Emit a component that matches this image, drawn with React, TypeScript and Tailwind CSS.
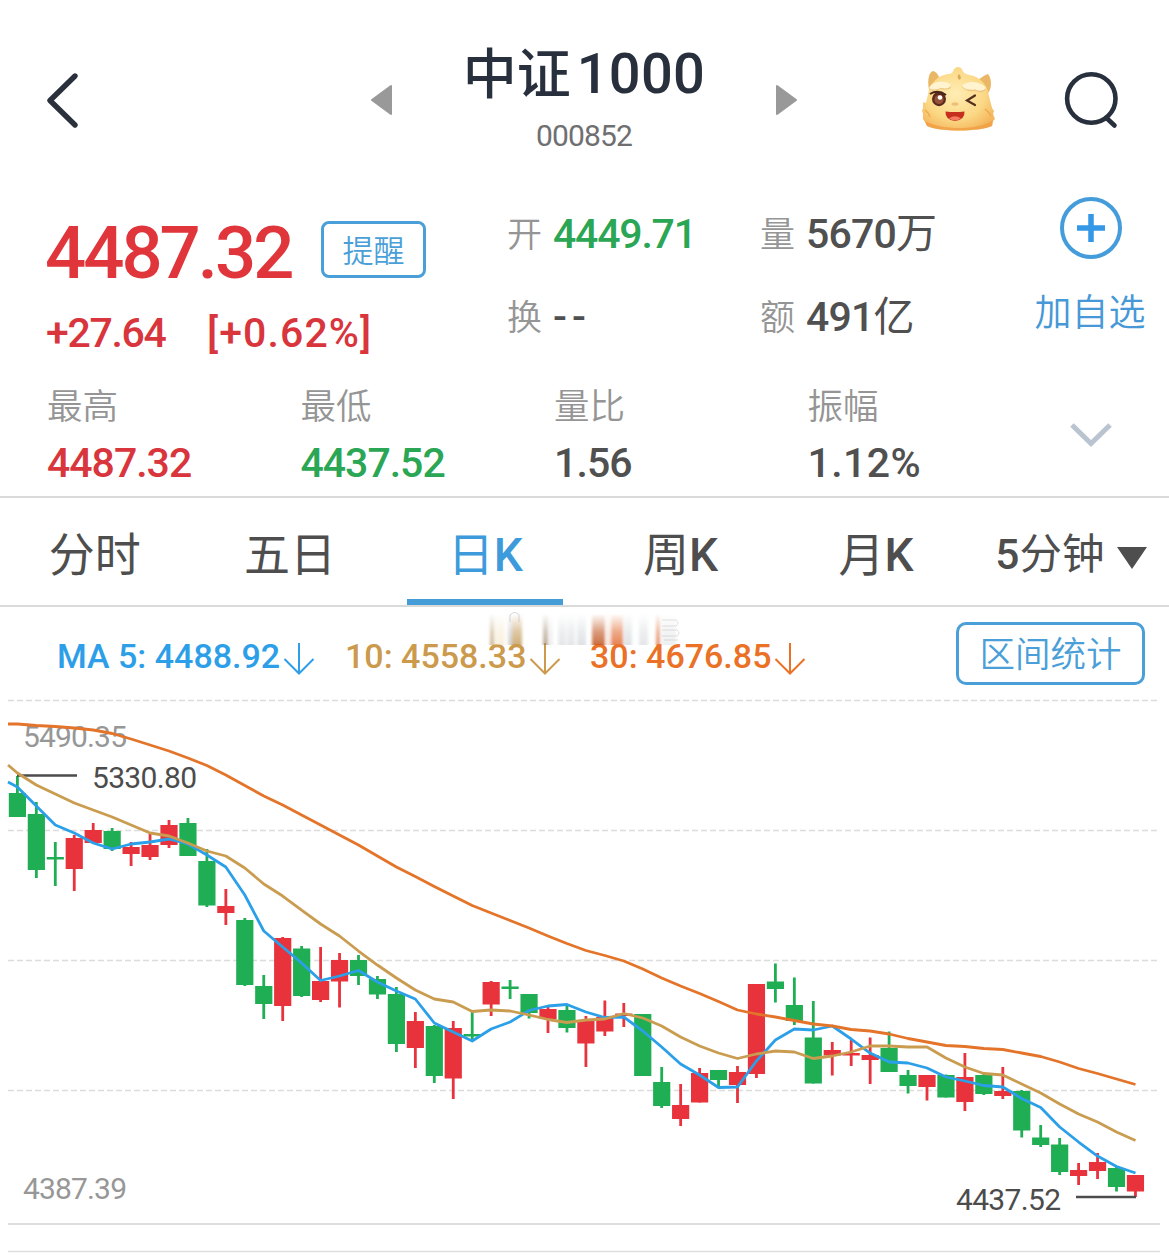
import React, { useState } from 'react';

type Candle = {
  up: boolean;
  high: number;
  top: number;
  bottom: number;
  low: number;
};

const RED = '#e8323c';
const GREEN = '#1fae54';

// [direction, high, body top, body bottom, low] in chart units
const rows: [string, number, number, number, number][] = [
  ['d', 776, 793, 817, 817],
  ['d', 802, 814, 870, 878],
  ['d', 842, 857, 859.5, 886],
  ['u', 835, 838, 869, 891],
  ['u', 823, 830, 843, 843],
  ['d', 828, 831, 849, 851],
  ['u', 842, 847, 854, 866],
  ['u', 834, 845, 857, 860],
  ['u', 820, 825, 845, 848],
  ['d', 818, 823, 856, 856],
  ['d', 849, 861, 905.5, 907],
  ['u', 889, 906, 913, 925],
  ['d', 918, 920, 985, 986],
  ['d', 975, 986, 1004, 1019],
  ['u', 937, 938, 1006, 1021],
  ['d', 946, 948.5, 996, 997],
  ['u', 947, 981, 1000, 1002],
  ['u', 953, 960, 981.5, 1007.5],
  ['d', 955, 960, 976, 985],
  ['d', 976, 979, 994.5, 999],
  ['d', 987, 994, 1044, 1052],
  ['u', 1012, 1021, 1048, 1068],
  ['d', 1025, 1026, 1076, 1083],
  ['u', 1021, 1028, 1078.5, 1099],
  ['d', 1012, 1034, 1036.5, 1040],
  ['u', 981, 982, 1004.5, 1016],
  ['d', 980, 986.5, 989, 999],
  ['d', 994, 994, 1013, 1018.5],
  ['u', 1007, 1009, 1019, 1033],
  ['d', 1006, 1010, 1028, 1032.5],
  ['u', 1016, 1021, 1043.5, 1067],
  ['u', 1000.5, 1017, 1031.5, 1036],
  ['u', 1003, 1013.5, 1016, 1027],
  ['d', 1014, 1014, 1076, 1076],
  ['d', 1067, 1082, 1106, 1108],
  ['u', 1084, 1105, 1119, 1126],
  ['u', 1068, 1073, 1102.5, 1102.5],
  ['d', 1070, 1070, 1080, 1087],
  ['u', 1066, 1072, 1085, 1103],
  ['u', 984, 984, 1074, 1078],
  ['d', 963.5, 981.5, 989, 1002.5],
  ['d', 977.5, 1005, 1021, 1025],
  ['d', 1001, 1037.5, 1083.5, 1083.5],
  ['u', 1042, 1050, 1055.5, 1075.5],
  ['u', 1040, 1053, 1055.5, 1066],
  ['u', 1037.5, 1055, 1060, 1084],
  ['d', 1031.5, 1048, 1072, 1072],
  ['d', 1070, 1075, 1086, 1093.5],
  ['u', 1075, 1075, 1087, 1100.5],
  ['d', 1074.5, 1075, 1097.5, 1097.5],
  ['u', 1053, 1077, 1102, 1111],
  ['d', 1072.5, 1075, 1094, 1095],
  ['u', 1067, 1091, 1096, 1099],
  ['d', 1090, 1091, 1130.5, 1137.5],
  ['d', 1125, 1137.5, 1145, 1147],
  ['d', 1138, 1144.5, 1172, 1175],
  ['u', 1163, 1170, 1176, 1185],
  ['u', 1153, 1162, 1171, 1179],
  ['d', 1167, 1168, 1187, 1191.5],
  ['u', 1175, 1175, 1191.5, 1197],
];

const candles: Candle[] = rows.map(([dir, high, top, bottom, low]) => ({
  up: dir === 'u',
  high,
  top,
  bottom,
  low,
}));

const ma5 = [
  787, 806, 825, 833, 843, 849, 844, 842, 839, 844, 855, 867, 895, 931, 947, 963, 980.5, 976, 970.5, 982, 991, 999,
  1023, 1032, 1041, 1029, 1022, 1010.5, 1006, 1004.5, 1012, 1017.5, 1017, 1031, 1047, 1064, 1075, 1087.5, 1087, 1061,
  1040, 1029, 1030, 1026, 1039, 1053, 1062, 1063, 1068, 1077, 1081, 1085.5, 1087, 1098.5, 1107.5, 1127, 1142, 1156,
  1166.5, 1173,
];

const ma10 = [
  773, 785, 794, 803, 810, 817, 825, 833, 836, 843, 851, 856, 868, 884, 896, 910, 924, 936, 951, 965, 978, 990, 999,
  1002, 1011.5, 1010, 1011, 1015, 1019.5, 1022.5, 1020, 1019, 1013.5, 1018, 1026, 1037, 1046, 1053, 1058.5, 1054,
  1051, 1052, 1058.5, 1056, 1052, 1046, 1046, 1047, 1047, 1058, 1067, 1073.5, 1075, 1084, 1093, 1104, 1114, 1122,
  1132, 1140.5,
];

const ma30 = [
  724, 725.5, 726.5, 728, 730, 733.5, 739, 745, 751, 758, 765.5, 775, 785.5, 796, 805, 815, 825, 835, 845, 856, 867,
  876.5, 886.5, 896, 905.5, 913, 920.5, 928, 936, 943.5, 950.5, 955.5, 961, 969, 978, 986, 993.5, 1001.5, 1010, 1014,
  1017, 1020.5, 1024, 1026, 1029.5, 1031, 1034, 1038.5, 1042, 1045.5, 1046.5, 1048.5, 1049.5, 1053, 1056.5, 1062,
  1068.5, 1073.5, 1079, 1084.5,
];

const xAt = (i: number) => 17.4 + i * 18.95;

const toLine = (startY: number, values: number[]) =>
  [`8,${startY}`, ...values.map((y, i) => `${xAt(i).toFixed(1)},${y}`)].join(' ');

const Mascot = () => (
  <svg width="76" height="68" viewBox="0 0 76 68">
    <defs>
      <radialGradient id="face" cx="46%" cy="42%" r="62%">
        <stop offset="0" stopColor="#ffedb4" />
        <stop offset="0.65" stopColor="#fbd885" />
        <stop offset="1" stopColor="#f5b75e" />
      </radialGradient>
    </defs>
    <path d="M8 24 C6 14 8 6 12 5 C16 6 18 10 19 14Z" fill="#e9b765" />
    <path d="M55 14 C60 13 63 9 67 8 C71 13 71 22 67 27Z" fill="#e9b765" />
    <path
      d="M8 24 C10 17 16 10 27 8 C31 8 32 6 33 3 Q37 -1 41 3 Q42 7 45 8 C56 10 64 15 67 25 C68 32 70 37 71 42 L73 45 L72 48 L74 53 L72 55 L71 60 C58 66 18 66 6 60 L4 56 L2 53 L2 48 L1 45 L2 42 L2 36 L5 37Z"
      fill="url(#face)"
      strokeLinejoin="round"
    />
    <path d="M4 55 C20 64 56 65 72 54 L71 60 C58 66 18 66 6 60Z" fill="#f09a3e" opacity=".7" />
    <path d="M64 43 Q68 46 70 50 M4 44 Q8 47 9 51" fill="none" stroke="#eda951" strokeWidth="1.500" />
    <path d="M36.500 11 Q38 5 40 12 Q38 16 36.500 11Z" fill="#dba95e" />
    <path d="M8 23 C12 15 26 15 30 20 Q30 25 20 23 Q12 26 8 23Z" fill="#ecc47f" />
    <path d="M8 22 C12 14 26 14 30 19 Q29 23.500 20 22 Q12 25 8 22Z" fill="#fff3d0" />
    <path d="M41 21 C45 15 60 16 65 23 Q62 28 54 25 Q45 26 41 21Z" fill="#ecc47f" />
    <path d="M41 20 C45 14 60 15 65 22 Q62 26.500 54 23.500 Q45 25 41 20Z" fill="#fff3d0" />
    <ellipse cx="18" cy="33" rx="7" ry="7.200" fill="#5a2b1c" />
    <path d="M9 28 Q17 23 25 29" fill="none" stroke="#4a2419" strokeWidth="2" />
    <circle cx="18" cy="33.500" r="4.600" fill="#965238" />
    <circle cx="19" cy="31.500" r="2.300" fill="#fff" />
    <path d="M54 29.500 L46 34.500 L54 39" fill="none" stroke="#54301d" strokeWidth="2.200" strokeLinecap="round" />
    <ellipse cx="34" cy="38" rx="3.500" ry="1.800" fill="#f0c078" />
    <path d="M24.500 45.500 Q34 46.500 43.500 45.500 Q44 54 34 55 Q24 54 24.500 45.500Z" fill="#c62e1e" />
    <path d="M28 52.500 Q34 48 40 52.500 Q34 56.500 28 52.500Z" fill="#f47a62" />
  </svg>
);

const Header = () => (
  <header className="flex h-[190px] items-start">
    <button className="ml-[46px] mt-[72px]">
      <svg width="34" height="58" viewBox="0 0 34 58" fill="none" stroke="#2a303c" strokeWidth="5.400">
        <path d="M29 4 L4 28.500 L29 53" strokeLinecap="round" strokeLinejoin="round" />
      </svg>
    </button>
    <button className="ml-[291px] mt-[85px]">
      <svg width="21" height="30" viewBox="0 0 21 30">
        <path d="M20 1 V29 L1 15Z" fill="#999" stroke="#999" strokeWidth="2" strokeLinejoin="round" />
      </svg>
    </button>
    <div className="flex w-[384px] flex-col items-center pt-[44px]">
      <h1 className="flex text-[56px] leading-[60px] font-medium text-[#27303c]">
        <span className="pt-[2px] text-[54px]">中证</span>
        <span className="ml-[6px] tracking-[0.3px]">1000</span>
      </h1>
      <p className="mt-[15px] text-[30px] leading-[30px] tracking-[-0.9px] text-[#6f6f72]">000852</p>
    </div>
    <button className="mt-[85px]">
      <svg width="21" height="30" viewBox="0 0 21 30">
        <path d="M1 1 V29 L20 15Z" fill="#999" stroke="#999" strokeWidth="2" strokeLinejoin="round" />
      </svg>
    </button>
    <button className="ml-[124px] mt-[66px]">
      <Mascot />
    </button>
    <button className="ml-[66px] mt-[71px]">
      <svg width="58" height="60" viewBox="0 0 58 60" fill="none" stroke="#27303c" strokeWidth="4.600">
        <circle cx="28.300" cy="27.500" r="24.200" />
        <path d="M43.500 47 L51.500 54.500" strokeLinecap="round" />
      </svg>
    </button>
  </header>
);

type QuoteItemProps = { label: string; value: string; unit?: string; className: string };

const QuoteItem = ({ label, value, unit, className }: QuoteItemProps) => (
  <div className="flex h-[44px] items-center">
    <span className="w-[46px] pt-[4px] text-[35px] leading-[44px] font-[350] text-[#959595]">{label}</span>
    <span className={`text-[41px] leading-[44px] font-medium ${className}`}>
      {value}
      {unit && <span className="font-normal">{unit}</span>}
    </span>
  </div>
);

const stats = [
  { label: '最高', value: '4487.32', color: 'tracking-[-1px] text-[#d8353d]' },
  { label: '最低', value: '4437.52', color: 'tracking-[-1px] text-[#2aa655]' },
  { label: '量比', value: '1.56', color: 'tracking-[-0.9px] text-[#505050]' },
  { label: '振幅', value: '1.12%', color: 'tracking-[0.4px] text-[#505050]' },
];

const Quote = () => (
  <section className="flex h-[308px] border-b-2 border-[#dadada]">
    <div className="flex w-[1011px] flex-col pl-[47px]">
      <div className="flex">
        <div className="w-[460px] pt-[31px]">
          <div className="flex h-[57px] items-center justify-between pr-[81px]">
            <span className="-ml-[2px] pt-[7px] text-[72.500px] leading-[57px] font-medium tracking-[-3px] text-[#e0353b]">
              4487.32
            </span>
            <button className="h-[57px] w-[105px] rounded-lg border-3 border-[#4b9fd8] pt-[3px] text-[31px] leading-[50px] font-[350] text-[#4b9fd8]">
              提醒
            </button>
          </div>
          <div className="mt-[33px] -ml-px flex h-[44px] text-[41px] leading-[44px] font-medium text-[#d8353d]">
            <span className="w-[161px] tracking-[-1.3px]">+27.64</span>
            <span className="tracking-[1.1px]">[+0.62%]</span>
          </div>
        </div>
        <div className="flex w-[253px] flex-col gap-[39px] pt-[22px]">
          <QuoteItem label="开" value="4449.71" className="tracking-[-1.2px] text-[#2aa655]" />
          <QuoteItem label="换" value="--" className="tracking-[5px] text-[#505050]" />
        </div>
        <div className="flex flex-col gap-[39px] pt-[22px]">
          <QuoteItem label="量" value="5670" unit="万" className="tracking-[-0.8px] text-[#505050]" />
          <QuoteItem label="额" value="491" unit="亿" className="tracking-[-0.8px] text-[#505050]" />
        </div>
      </div>
      <div className="mt-[31px] flex">
        {stats.map((s) => (
          <div key={s.label} className="w-[253.500px] shrink-0">
            <p className="h-[38px] pt-[2px] text-[35.500px] leading-[38px] font-[350] text-[#959595]">{s.label}</p>
            <p className={`mt-[17px] text-[41px] leading-[44px] font-medium ${s.color}`}>{s.value}</p>
          </div>
        ))}
      </div>
    </div>
    <div className="flex w-[158px] flex-col items-center pt-[7px] pl-[2px]">
      <button className="flex flex-col items-center">
        <svg width="62" height="62" viewBox="0 0 62 62" fill="none" stroke="#459cdb">
          <circle cx="31" cy="31" r="29" strokeWidth="4" />
          <path d="M31 17 V45 M17 31 H45" stroke="#3598e6" strokeWidth="5.500" />
        </svg>
        <span className="mt-[31px] mr-[2px] text-[37px] leading-[48px] font-[350] text-[#4699d6]">加自选</span>
      </button>
      <svg className="mt-[83px]" width="44" height="28" viewBox="0 0 44 28" fill="none">
        <path d="M3 4 L22 22.500 L41 4" stroke="#b9c4d0" strokeWidth="5" />
      </svg>
    </div>
  </section>
);

const tabs = ['分时', '五日', '日K', '周K', '月K', '5分钟'];

const Tabs = () => {
  const [active, setActive] = useState('日K');

  return (
    <nav className="-ml-[3px] grid h-[109px] grid-cols-6 border-b-2 border-[#dadada]">
      {tabs.map((tab) => (
        <button
          key={tab}
          onClick={() => setActive(tab)}
          className={`flex flex-col items-center text-[46px] ${active === tab ? 'text-[#3d9bdc]' : 'text-[#4e4e4e]'}`}
        >
          <span className="flex grow items-center pt-[12px] leading-[60px] whitespace-nowrap">
            {tab === '5分钟' ? (
              <span className="flex items-center gap-[13px] text-[42.500px]">
                <span>
                  <span className="font-medium">5</span>分钟
                </span>
                <svg width="30" height="22" viewBox="0 0 30 22" className="mt-[7px]">
                  <path d="M0 0 H30 L15 22Z" fill="#4e4e4e" />
                </svg>
              </span>
            ) : (
              <span>
                {tab.replace('K', '')}
                {tab.endsWith('K') && <span className="font-medium">K</span>}
              </span>
            )}
          </span>
          <span className={`h-[6px] w-[156px] ${active === tab ? 'bg-[#449dd7]' : ''}`} />
        </button>
      ))}
    </nav>
  );
};

const MaItem = ({ label, className }: { label: string; className: string }) => (
  <span className={`flex items-center ${className}`}>
    {label}
    <svg width="32" height="34" viewBox="0 0 32 34" className="ml-[3px] mt-[6px]" fill="none" stroke="currentColor" strokeWidth="2">
      <path d="M16 1 V31 M1.500 17 L16 31.500 L30.500 17" />
    </svg>
  </span>
);

// Smeared strips above the MA10 and MA30 values
const smears = [
  { x: 20, w: 4, color: '#b08a58', o: 0.7 },
  { x: 24, w: 11, color: '#f3e3c2', o: 0.6 },
  { x: 38, w: 4, color: '#999', o: 0.5 },
  { x: 42, w: 10, color: '#c39a58', o: 0.9 },
  { x: 73, w: 5, color: '#a08a6a', o: 0.8 },
  { x: 79, w: 4, color: '#ccd0d4', o: 0.4 },
  { x: 88, w: 8, color: '#ccd0d4', o: 0.6 },
  { x: 97, w: 8, color: '#ccd0d4', o: 0.6 },
  { x: 107, w: 9, color: '#ccd0d4', o: 0.7 },
  { x: 122, w: 13, color: '#c25a28', o: 1 },
  { x: 136, w: 5, color: '#f3d3c2', o: 0.7 },
  { x: 141, w: 12, color: '#e2733a', o: 1 },
  { x: 154, w: 8, color: '#ccd0d4', o: 0.7 },
  { x: 169, w: 9, color: '#ccd0d4', o: 0.6 },
  { x: 186, w: 4, color: '#df7844', o: 0.9 },
  { x: 192, w: 14, color: '#d8dadd', o: 0.5 },
];

const Smudge = () => (
  <svg className="absolute left-[470px] top-[3px]" width="230" height="40" viewBox="0 0 230 40">
    <defs>
      <linearGradient id="fade" x1="0" y1="0" x2="0" y2="1">
        <stop offset="0.1" stopColor="#fff" stopOpacity="0" />
        <stop offset="0.6" stopColor="#fff" stopOpacity=".6" />
        <stop offset="1" stopColor="#fff" stopOpacity=".9" />
      </linearGradient>
      <mask id="fadeMask">
        <rect width="230" height="36" fill="url(#fade)" />
      </mask>
      <filter id="soft">
        <feGaussianBlur stdDeviation="1.4 0.3" />
      </filter>
    </defs>
    <g mask="url(#fadeMask)">
      <g filter="url(#soft)">
        {smears.map((s) => (
          <rect key={s.x} x={s.x} y="2" width={s.w} height="33" fill={s.color} opacity={s.o} />
        ))}
      </g>
    </g>
    <path d="M40 12 V5 Q45 0 49 5 V12" fill="none" stroke="#bbb" strokeWidth="1" opacity=".6" />
    <g fill="none" stroke="#bbb" strokeWidth="1" opacity=".45">
      <path d="M192 10 H206 Q210 13 206 16 H192" />
      <path d="M192 20 H207 Q211 23 207 26 H192" />
      <path d="M194 30 H208" />
    </g>
  </svg>
);

const MaBar = () => (
  <div className="relative flex h-[88px] items-start">
    <div className="flex pt-[28px] pl-[57px] text-[34px] leading-[42px] font-medium whitespace-nowrap">
      <MaItem label="MA 5: 4488.92" className="w-[288px] text-[#2d9ee8]" />
      <MaItem label="10: 4558.33" className="w-[245px] text-[#cb9a4c]" />
      <MaItem label="30: 4676.85" className="text-[#ea7125]" />
    </div>
    <button className="mr-[24px] ml-auto mt-[15px] h-[63px] w-[189px] rounded-[10px] border-3 border-[#4b9fd8] pt-[3px] text-[35.500px] leading-[54px] font-[350] text-[#4b9fd8]">
      区间统计
    </button>
    <Smudge />
  </div>
);

const Chart = () => (
  <svg width="1169" height="563" viewBox="0 695 1169 563" className="block">
    {[700.5, 830.5, 960.5, 1090.5].map((y) => (
      <line key={y} x1="8" x2="1158" y1={y} y2={y} stroke="#dcdcdc" strokeWidth="1.500" strokeDasharray="6 3" />
    ))}
    <line x1="8" x2="1160" y1="1224" y2="1224" stroke="#dedede" strokeWidth="2" />
    <line x1="8" x2="1160" y1="1251.500" y2="1251.500" stroke="#dedede" strokeWidth="1.500" />

    <g fontSize="30">
      <text x="23" y="747" fill="#979797" textLength="104">5490.35</text>
      <text x="23" y="1199" fill="#979797" textLength="104">4387.39</text>
      <text x="92" y="788" fill="#4c4c4c" textLength="105">5330.80</text>
      <text x="956" y="1210" fill="#4c4c4c" textLength="105">4437.52</text>
    </g>

    {candles.map((c, i) => {
      const x = xAt(i);
      const color = c.up ? RED : GREEN;
      return (
        <g key={i} fill={color}>
          <rect x={x - 1.4} y={c.high} width="2.8" height={c.low - c.high} />
          <rect x={x - 8.6} y={c.top} width="17.2" height={c.bottom - c.top} />
        </g>
      );
    })}

    <path d="M17 775.500 H77 M1076 1197 H1136" stroke="#4c4c4c" strokeWidth="2.600" />

    <g fill="none" strokeWidth="2.800" strokeLinejoin="round">
      <polyline points={toLine(782, ma5)} stroke="#2ba0e8" />
      <polyline points={toLine(765, ma10)} stroke="#c99c50" />
      <polyline points={toLine(724, ma30)} stroke="#e37429" />
    </g>
  </svg>
);

const App: React.FC = () => {
  return (
    <div className="h-[1258px] w-[1169px] overflow-hidden bg-white font-[Roboto,'Noto_Sans_CJK_SC',sans-serif]">
      <Header />
      <Quote />
      <Tabs />
      <MaBar />
      <Chart />
    </div>
  );
};

export default App;
